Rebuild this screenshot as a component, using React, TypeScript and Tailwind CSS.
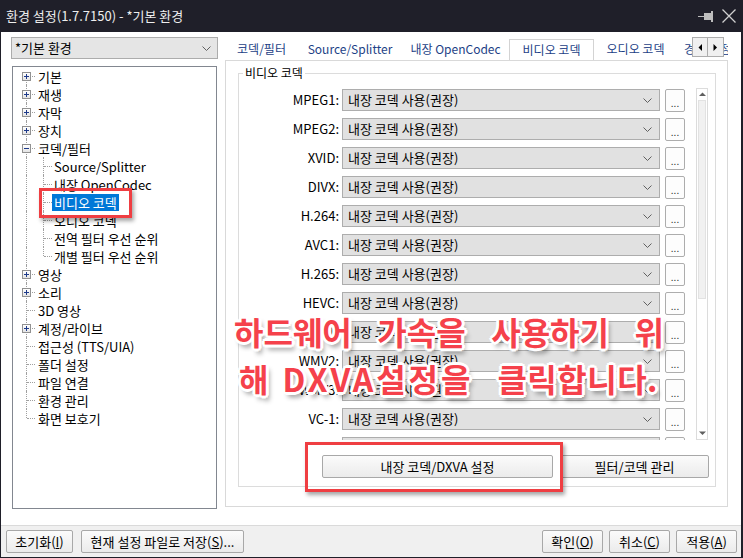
import React from 'react'

type TreeItem = {
  label: string
  level?: 0 | 1
  exp?: '+' | '-'
  selected?: boolean
  lastChild?: boolean
}

const tree: TreeItem[] = [
  { label: '기본', exp: '+' },
  { label: '재생', exp: '+' },
  { label: '자막', exp: '+' },
  { label: '장치', exp: '+' },
  { label: '코덱/필터', exp: '-' },
  { label: 'Source/Splitter', level: 1 },
  { label: '내장 OpenCodec', level: 1 },
  { label: '비디오 코덱', level: 1, selected: true },
  { label: '오디오 코덱', level: 1 },
  { label: '전역 필터 우선 순위', level: 1 },
  { label: '개별 필터 우선 순위', level: 1, lastChild: true },
  { label: '영상', exp: '+' },
  { label: '소리', exp: '+' },
  { label: '3D 영상' },
  { label: '계정/라이브', exp: '+' },
  { label: '접근성 (TTS/UIA)' },
  { label: '폴더 설정' },
  { label: '파일 연결' },
  { label: '환경 관리' },
  { label: '화면 보호기' },
]

const codecs = ['MPEG1', 'MPEG2', 'XVID', 'DIVX', 'H.264', 'AVC1', 'H.265', 'HEVC', 'WMV1', 'WMV2', 'WMV3', 'VC-1', 'WVC1']

const tabs = [
  { label: '코덱/필터', w: 'w-[73px]' },
  { label: 'Source/Splitter', w: 'w-[104px]' },
  { label: '내장 OpenCodec', w: 'w-[107px]' },
  { label: '비디오 코덱', w: 'w-[85px]', active: true },
  { label: '오디오 코덱', w: 'w-[83px]' },
  { label: '경로 설정', w: 'w-[80px]' },
]

const Chevron = () => (
  <svg width="9" height="5" viewBox="0 0 9 5" className="shrink-0">
    <path d="M0.5 0.5L4.5 4.5L8.5 0.5" fill="none" stroke="#606060" strokeWidth="1" />
  </svg>
)

const Expander: React.FC<{ minus?: boolean }> = ({ minus }) => (
  <div className="absolute left-[9px] top-[5px] w-[9px] h-[9px] border border-[#919191] bg-gradient-to-b from-white to-[#e4e4e4] flex items-center justify-center">
    <svg width="7" height="7" viewBox="0 0 7 7">
      <path d={minus ? 'M1 3.5H6' : 'M1 3.5H6M3.5 1V6'} stroke="#1e3a8a" strokeWidth="1" />
    </svg>
  </div>
)

const TreeRow: React.FC<{ item: TreeItem; first: boolean; last: boolean }> = ({ item, first, last }) => (
  <div className="flex h-[18px] items-center">
    <div className="relative w-[23px] h-full shrink-0">
      <div className={`absolute left-[13px] border-l border-dotted border-[#a0a0a0] ${first ? 'top-[9px]' : 'top-0'} ${last ? 'h-[9px]' : 'bottom-0'}`} />
      {!item.level && <div className="absolute left-[14px] top-[9px] w-[8px] border-t border-dotted border-[#a0a0a0]" />}
      {item.exp && <Expander minus={item.exp === '-'} />}
    </div>
    {item.level === 1 && (
      <div className="relative w-[16px] h-full shrink-0">
        <div className={`absolute left-[7px] top-0 border-l border-dotted border-[#a0a0a0] ${item.lastChild ? 'h-[9px]' : 'bottom-0'}`} />
        <div className="absolute left-[8px] top-[9px] w-[8px] border-t border-dotted border-[#a0a0a0]" />
      </div>
    )}
    <span className={`px-[2px] h-[17px] leading-[17px] text-[13px] whitespace-nowrap ${item.selected ? 'bg-[#0078d7] text-white' : 'text-black'}`}>
      {item.label}
    </span>
  </div>
)

const CodecRow: React.FC<{ label: string }> = ({ label }) => (
  <div className="flex items-center h-[22px] shrink-0">
    <div className="w-[100px] text-right text-[13px] leading-[22px] text-black">{label}:</div>
    <div className="ml-[3px] w-[318px] h-[22px] bg-[#e1e1e1] border border-[#adadad] flex items-center justify-between pl-[5px] pr-[7px]">
      <span className="text-[13px] leading-[20px]">내장 코덱 사용(권장)</span>
      <Chevron />
    </div>
    <div className="ml-[5px] w-[20px] h-[23px] bg-[#fdfdfd] border border-[#adadad] rounded-[2px] flex items-end justify-center pb-[3px] text-[10px] leading-[10px] text-[#333]">
      ...
    </div>
  </div>
)

const Btn: React.FC<React.PropsWithChildren<{ w: string }>> = ({ w, children }) => (
  <div className={`${w} h-[23px] shrink-0 bg-gradient-to-b from-[#fbfbfb] to-[#ebebeb] border border-[#a8a8a8] rounded-[2px] flex items-center justify-center text-[13px] leading-[20px] text-black whitespace-nowrap`}>
    {children}
  </div>
)

const Tri: React.FC<{ dir: 'up' | 'down' | 'left' | 'right'; color?: string }> = ({ dir, color = '#606060' }) => {
  const d = {
    up: 'M0 4L3.5 0.5L7 4Z',
    down: 'M0 0.5L3.5 4L7 0.5Z',
    left: 'M4 0L0.5 3.5L4 7Z',
    right: 'M0.5 0L4 3.5L0.5 7Z',
  }[dir]
  const vertical = dir === 'up' || dir === 'down'
  return (
    <svg width={vertical ? 7 : 5} height={vertical ? 5 : 7} viewBox={vertical ? '0 0 7 5' : '0 0 5 7'}>
      <path d={d} fill={color} />
    </svg>
  )
}

export default function App() {
  return (
    <div className="relative w-[743px] h-[558px] overflow-hidden bg-[#1f1f29] flex flex-col [font-family:'Noto_Sans_CJK_KR',sans-serif]">
      {/* title bar */}
      <div className="h-[32px] shrink-0 flex items-center justify-between pl-[6px] pr-[7px]">
        <span className="text-[13px] text-[#eeeeee] leading-[18px]">환경 설정(1.7.7150) - *기본 환경</span>
        <div className="flex items-center gap-[8px]">
          <svg width="16" height="12" viewBox="0 0 16 12">
            <path d="M0 6.5H7" stroke="#bdbdbd" strokeWidth="1" />
            <rect x="6" y="3" width="7" height="7" fill="#bdbdbd" />
            <rect x="13" y="1" width="2" height="11" fill="#bdbdbd" />
          </svg>
          <svg width="14" height="14" viewBox="0 0 14 14">
            <path d="M0.5 0.5L13.5 13.5M13.5 0.5L0.5 13.5" stroke="#d0d0d0" strokeWidth="1.3" />
          </svg>
        </div>
      </div>

      {/* window body */}
      <div className="flex-1 ml-[1px] mr-[2px] mb-[1px] bg-white flex flex-col text-[12px]">
        <div className="h-[493px] flex">
          {/* left column */}
          <div className="ml-[10px] w-[207px] pt-[5px] flex flex-col">
            <div className="h-[22px] bg-[#e5e5e5] border border-[#acacac] flex items-center justify-between pl-[3px] pr-[6px]">
              <span className="text-[13px] leading-[20px]">*기본 환경</span>
              <Chevron />
            </div>
            <div className="mt-[7px] mx-[1px] h-[443px] border border-[#828790] bg-white">
              {tree.map((item, i) => (
                <TreeRow key={item.label} item={item} first={i === 0} last={i === tree.length - 1} />
              ))}
            </div>
          </div>

          {/* right column */}
          <div className="ml-[7px] w-[503px] pt-[5px] flex flex-col">
            <div className="relative h-[23px] flex items-end overflow-hidden">
              {tabs.map((t) =>
                t.active ? (
                  <div key={t.label} className={`${t.w} shrink-0 relative z-10 h-[22px] -mb-[1px] bg-white border border-b-0 border-[#d3d3d3] flex items-center justify-center pb-[2px] text-[#1d3f86]`}>
                    {t.label}
                  </div>
                ) : (
                  <div key={t.label} className={`${t.w} shrink-0 h-[21px] flex items-center justify-center pb-[1px] text-[#1d3f86] whitespace-nowrap ${t.label === '경로 설정' ? 'justify-start pl-[7px]' : ''}`}>
                    {t.label}
                  </div>
                ),
              )}
              <div className="absolute right-[4px] top-0 h-[20px] flex z-20">
                <div className="w-[16px] h-[20px] bg-[#f0f0f0] border border-[#adadad] flex items-center justify-center">
                  <Tri dir="left" color="#000" />
                </div>
                <div className="w-[16px] h-[20px] bg-[#f0f0f0] border border-l-0 border-[#adadad] flex items-center justify-center">
                  <Tri dir="right" color="#000" />
                </div>
              </div>
            </div>

            <div className="h-[447px] border border-[#d9d9d9] pt-[4px] pl-[12px] pr-[11px]">
              <fieldset className="border border-[#dcdcdc] pb-[8px]">
                <legend className="ml-[4px] px-[2px] leading-[16px]">비디오 코덱</legend>
                <div className="mt-[7px] h-[352px] flex">
                  <div className="w-[446px] h-full overflow-hidden pt-[1px] flex flex-col gap-[7px]">
                    {codecs.map((c) => (
                      <CodecRow key={c} label={c} />
                    ))}
                  </div>
                  <div className="ml-[11px] w-[12px] h-full border border-[#dcdcdc] flex flex-col">
                    <div className="h-[11px] flex items-center justify-center">
                      <Tri dir="up" />
                    </div>
                    <div className="h-[199px] mx-[1px] bg-[#f1f1f1] border border-[#e2e2e2]" />
                    <div className="flex-1" />
                    <div className="h-[11px] flex items-center justify-center">
                      <Tri dir="down" />
                    </div>
                  </div>
                </div>
                <div className="mt-[15px] flex gap-[7px] pl-[83px]">
                  <Btn w="w-[231px]">내장 코덱/DXVA 설정</Btn>
                  <Btn w="w-[149px]">필터/코덱 관리</Btn>
                </div>
              </fieldset>
            </div>
          </div>
        </div>

        {/* bottom bar */}
        <div className="flex-1 border-t border-[#dadada] bg-[#f0f0f0] flex items-center justify-between pl-[5px] pr-[4px]">
          <div className="flex gap-[8px]">
            <Btn w="w-[67px]">초기화(<span className="underline">I</span>)</Btn>
            <Btn w="w-[163px]">현재 설정 파일로 저장(<span className="underline">S</span>)...</Btn>
          </div>
          <div className="flex gap-[6px]">
            <Btn w="w-[61px]">확인(<span className="underline">O</span>)</Btn>
            <Btn w="w-[61px]">취소(<span className="underline">C</span>)</Btn>
            <Btn w="w-[61px]">적용(<span className="underline">A</span>)</Btn>
          </div>
        </div>
      </div>

      {/* annotation overlays */}
      <div className="absolute left-[39px] top-[188px] w-[93px] h-[30px] border-[3px] border-[#ef3e42] shadow-[2px_3px_4px_rgba(0,0,0,0.35)]" />
      <div className="absolute left-[305px] top-[442px] w-[258px] h-[50px] border-[3px] border-[#ef3e42] shadow-[2px_3px_4px_rgba(0,0,0,0.35)]" />

      <div className="absolute left-[234px] top-[313px] w-[430px] flex flex-col text-[32px] leading-[36px] font-bold text-[#f5414b] [text-shadow:2px_0_0_#fff,-2px_0_0_#fff,0_2px_0_#fff,0_-2px_0_#fff,2px_2px_0_#fff,-2px_-2px_0_#fff,2px_-2px_0_#fff,-2px_2px_0_#fff,3px_0_0_#fff,-3px_0_0_#fff,0_3px_0_#fff,0_-3px_0_#fff,3px_5px_5px_rgba(0,0,0,0.45)]">
        <div className="flex justify-between">
          <span>하드웨어</span>
          <span>가속을</span>
          <span>사용하기</span>
          <span>위</span>
        </div>
        <div className="mt-[11px] flex pl-[5px] pr-[6px]">
          <span>해</span>
          <span className="ml-[14px] tracking-[3px]">DXVA설정을</span>
          <span className="ml-auto tracking-[0.5px]">클릭합니다.</span>
        </div>
      </div>
    </div>
  )
}
